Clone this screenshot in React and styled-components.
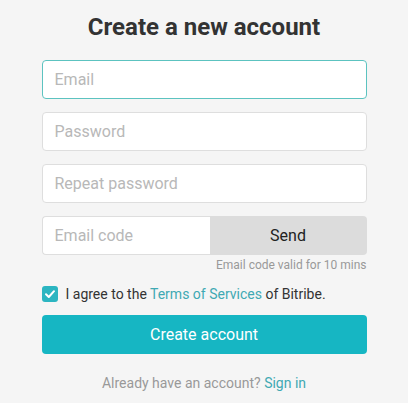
import React from 'react';
import styled, { createGlobalStyle } from 'styled-components';

const GlobalStyle = createGlobalStyle`
  body {
    margin: 0;
    background: #f5f5f5;
    font-family: Roboto, "Liberation Sans", sans-serif;
  }
`;

const Page = styled.div`
  width: 325px;
  margin: 0 auto;
  padding-top: 12px;
`;

const Title = styled.h1`
  margin: 0 0 18px;
  font-family: Roboto, sans-serif;
  font-size: 24px;
  line-height: 30px;
  font-weight: 700;
  color: #333;
  text-align: center;
`;

const Field = styled.input`
  display: block;
  box-sizing: border-box;
  width: 100%;
  height: 39px;
  margin-bottom: 13px;
  padding: 0 12px;
  border: 1px solid ${p => (p.$active ? '#5cc3c0' : '#dedede')};
  border-radius: 4px;
  background: #fff;
  font-family: Roboto, sans-serif;
  font-size: 16px;
  color: #333;
  outline: none;
  caret-color: #222;

  &::placeholder {
    color: #b8b8b8;
  }
`;

const CodeRow = styled.div`
  display: flex;
  height: 39px;
`;

const CodeField = styled(Field)`
  width: 168px;
  margin: 0;
  border-radius: 4px 0 0 4px;
  border-right: none;
  height: 39px;
`;

const SendButton = styled.button`
  flex: 1;
  border: none;
  border-radius: 0 4px 4px 0;
  background: #dcdcdc;
  font-family: Roboto, sans-serif;
  font-size: 16px;
  color: #222;
`;

const Hint = styled.div`
  margin-top: 3px;
  text-align: right;
  font-size: 12px;
  line-height: 15px;
  color: #999;
`;

const Agree = styled.label`
  display: flex;
  align-items: center;
  gap: 8px;
  margin-top: 13px;
  font-size: 14px;
  color: #333;
`;

const Box = styled.span`
  display: flex;
  align-items: center;
  justify-content: center;
  width: 16px;
  height: 16px;
  border-radius: 3px;
  background: #2bb5c1;
`;

const Link = styled.a`
  color: #3fa9b3;
  text-decoration: none;
`;

const Submit = styled.button`
  display: block;
  width: 100%;
  height: 39px;
  margin-top: 13px;
  border: none;
  border-radius: 4px;
  background: #16b6c3;
  color: #fff;
  font-family: Roboto, sans-serif;
  font-size: 16px;
`;

const Footer = styled.p`
  margin: 21px 0 0;
  text-align: center;
  font-size: 14px;
  color: #999;
`;

export default function App() {
  return (
    <>
      <GlobalStyle />
      <Page>
        <Title>Create a new account</Title>
        <Field $active autoFocus placeholder="Email" />
        <Field type="password" placeholder="Password" />
        <Field type="password" placeholder="Repeat password" />
        <CodeRow>
          <CodeField placeholder="Email code" />
          <SendButton>Send</SendButton>
        </CodeRow>
        <Hint>Email code valid for 10 mins</Hint>
        <Agree>
          <Box>
            <svg width="12" height="12" viewBox="0 0 12 12">
              <path d="M2 6.2 L4.8 9 L10 3.2" fill="none" stroke="#fff" strokeWidth="2" strokeLinecap="round" strokeLinejoin="round" />
            </svg>
          </Box>
          <span>
            I agree to the <Link href="#">Terms of Services</Link> of Bitribe.
          </span>
        </Agree>
        <Submit>Create account</Submit>
        <Footer>
          Already have an account? <Link href="#">Sign in</Link>
        </Footer>
      </Page>
    </>
  );
}
